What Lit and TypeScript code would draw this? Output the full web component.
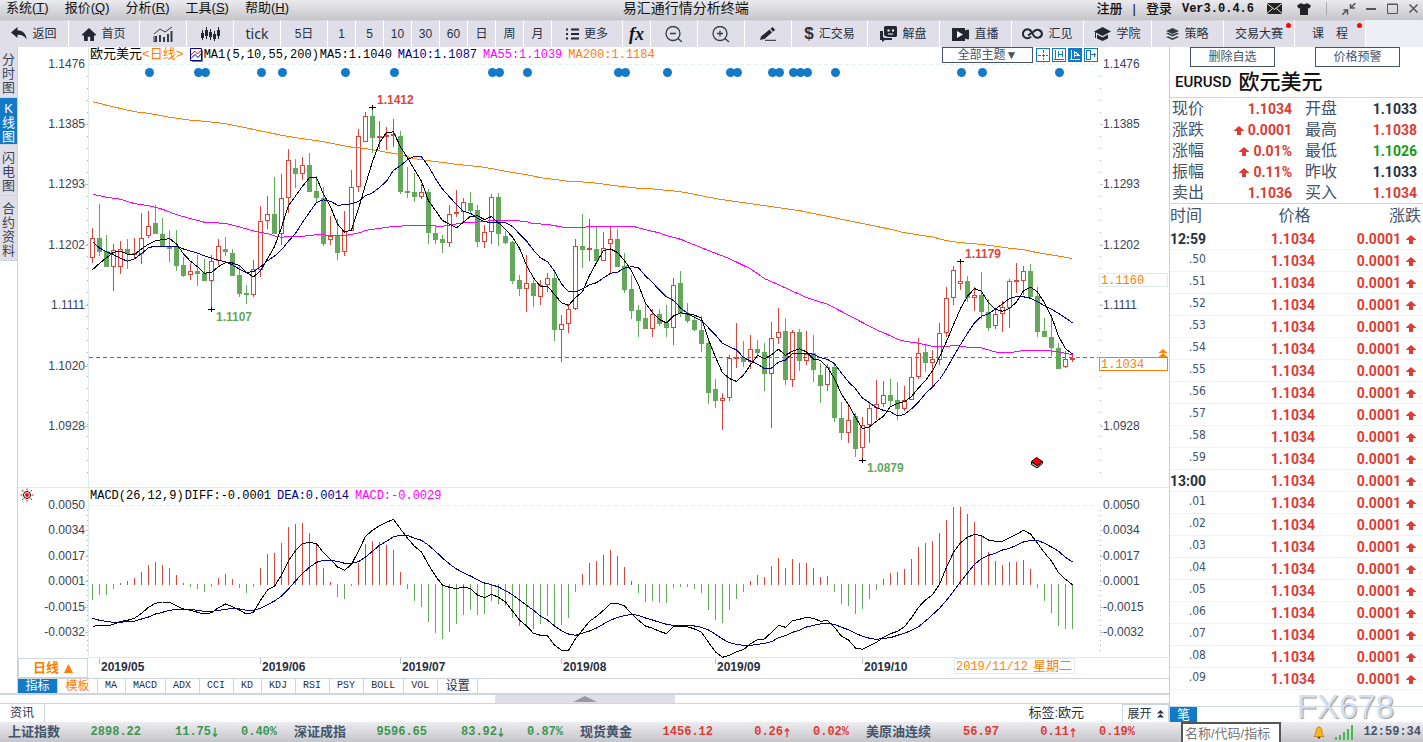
import { LitElement, html, svg, css } from "lit";
import { customElement } from "lit/decorators.js";
import { classMap } from "lit/directives/class-map.js";

const STEP = 7;
const X0 = 92;
const barX = (i: number) => X0 + STEP * i;

/* Each bar: direction, high, body top, body bottom, low (thirds of a chart unit, measured from the segment's base). */
const SEGMENTS = [
  {
    base: 90,
    bars: `r414,445,502,518 g342,445,483,497 g435,483,530,530 r462,481,530,600 r454,479,530,551 g449,477,490,536
r445,489,494,502 r369,445,490,521 r364,409,437,442 g345,399,431,431 g384,432,470,470 g422,470,474,515
g422,473,525,540 g503,525,557,560 r520,543,553,569 g495,543,551,587 g508,551,572,572 r497,514,572,656
r448,469,512,522 g441,477,485,497 g477,489,555,555 g530,555,611,620 g587,611,614,639 r511,538,614,620
r348,394,539,560 r318,373,392,416 g262,372,431,431 r254,324,431,464 r177,211,323,368 g209,234,251,293
r201,226,251,269 g189,226,303,305 g260,303,323,335 g293,324,459,465 r378,440,448,464 g388,437,486,509
r364,423,485,497 r240,292,422,422 r117,139,290,305 r67,79,154,154 g52,79,143,186 r94,139,143,176
r112,136,140,177 r87,132,137,170 g124,139,303,311 g231,303,306,323 g249,306,320,335 r283,307,320,325
g297,306,426,459 g406,430,447,459 g437,447,458,486 r345,373,458,468 r300,366,371,380 r324,337,364,396
g306,339,360,368 g347,360,453,468 r406,427,453,471 r312,322,425,461 g310,321,431,465 g424,438,456,459
g453,456,570,579 g557,570,594,617 r495,580,594,665 g572,580,617,648 r570,586,620,644 r549,565,584,605
g545,565,719,750 r677,703,718,815 r644,658,700,728 r447,469,656,659 g372,468,477,533 r387,474,478,512
g411,477,512,515 r426,475,512,512 r409,447,461,547 g417,447,530,530 g489,530,597,608 g556,597,660,686
g645,660,692,738 g638,684,716,716 r657,673,715,738 g657,672,701,707 g645,701,713,740 r564,586,713,764
g543,579,669,680 g640,669,692,698 g680,692,717,722 g680,720,759,785`,
  },
  {
    base: 230,
    bars: `g330,339,488,521 g449,477,512,533 r491,505,512,597 r375,385,503,510 r279,381,386,413 g335,384,393,408
r315,358,395,416 g330,357,366,378 g341,366,431,480 r277,325,430,593 r235,307,322,339 g264,303,449,462
r300,307,449,468 g297,306,392,420 r303,373,392,402 g316,371,417,453 g399,435,465,516 r402,412,464,480
g402,411,563,573 g516,564,608,629 r530,571,608,638 g551,558,654,678 r561,586,653,688 r521,535,584,638
r450,522,533,567 r453,496,521,530 g447,495,510,528 g456,510,536,567 r469,512,536,542 r382,442,508,508
r324,370,439,446 g346,366,398,423 r360,388,398,466 r280,310,387,402 r171,205,307,320 r108,121,202,222
r94,154,160,177 g139,153,203,215 r172,196,202,240 g126,195,245,264 g207,246,293,302 r237,253,287,296
r213,232,250,303 r148,153,231,291 r99,150,153,186 r108,124,150,194 g102,123,198,204 g171,198,303,320
g264,303,320,320 g266,321,353,377 g339,354,416,416 r364,388,410,413 r376,384,387,395`,
  },
];

interface Bar { up: boolean; high: number; top: number; bottom: number; low: number; close: number }

const BARS: Bar[] = SEGMENTS.flatMap(({ base, bars }) =>
  bars.split(/\s+/).map((t) => {
    const up = t[0] === "r";
    const [high, top, bottom, low] = t.slice(1).split(",").map((n) => base + Number(n) / 3);
    return { up, high, top, bottom, low, close: up ? top : bottom };
  }),
);

const movingAverage = (n: number, head: number[]) =>
  BARS.map((_, i) =>
    i < head.length
      ? 90 + head[i] / 3
      : BARS.slice(i - n + 1, i + 1).reduce((s, b) => s + b.close, 0) / n,
  );

const MA5 = movingAverage(5, [539, 520, 503, 487]);
const MA10 = movingAverage(10, [455, 474, 485, 494, 505, 514, 506, 491, 473]);

const curve = (ox: number, oy: number, pts: string) =>
  pts.split(" ").map((p) => {
    const [x, y] = p.split(",").map(Number);
    return `${(ox + x / 3).toFixed(1)},${(oy + y / 3).toFixed(1)}`;
  }).join(" ");

const MA55 = [
  curve(0, 90, "278,313 320,322 362,328 404,341 446,347 488,358 530,374 572,386 614,397 677,400 719,411 761,423 803,431 824,438 845,442 866,439 908,439 950,434 1034,437 1080,428"),
  curve(340, 90, "77,421 161,409 245,406 308,409 371,398 434,395 455,391 520,391 560,395 581,401 623,403 665,411 738,411 754,408 875,408 917,419 959,429 980,437 1022,448 1064,465 1080,471"),
  curve(700, 230, "0,52 68,78 89,86 152,117 194,146 257,174 320,203 383,223 446,256 509,289 530,300 551,308 593,328 614,334 656,340 698,349 740,350 761,346 803,352 845,354 887,366 929,368 971,361 1034,361 1076,366 1118,374"),
].join(" ");

const MA200 = [
  curve(0, 90, "278,35 320,46 404,65 446,70 509,82 572,91 614,94 677,101 740,114 845,136 887,143 971,155 1034,168 1060,172"),
  curve(340, 90, "56,173 98,179 140,187 182,194 224,206 266,212 350,223 434,232 497,244 560,254 602,263 686,274 749,277 833,288 896,295 938,297 1022,305 1064,313 1106,322 1140,328"),
  curve(700, 230, "300,-58 450,-27 583,0 604,6 656,15 698,21 740,32 782,38 824,41 866,46 929,55 971,59 1013,68 1055,75 1097,82 1115,86"),
].join(" ");

const nums = (s: string) => s.trim().split(/\s+/).map((n) => 480 + Number(n) / 3);

const HIST = nums(`360 345 345 327 308 303 294 276 254 246 254 264 285 308 321 327 336 321 294 282 297 324 339 321 264
222 219 188 141 132 128 158 190 264 306 350 357 318 249 192 183 186 194 210 276 327 363 381 426 459 477 456 432 405 390
405 402 363 372 378 414 438 438 447 432 408 435 435 414 336 282 249 243 225 210 228 261 303 339 366 363 369 369 324 321
321 327 339 390 420 429 390 357 336 303 285 291 258 234 264 237 249 249 264 291 288 336 372 378 402 387 357 330 297 279
276 267 237 201 189 183 159 120 81 81 102 126 167 216 243 255 246 246 240 267 324 363 399 438 447 447`);

const DIFF = nums(`439 436 438 433 424 421 415 400 382 370 366 367 377 387 391 397 402 398 383 372 380 391 402 397 361
330 319 285 242 212 191 187 191 218 238 261 271 253 213 169 151 137 127 118 147 175 199 216 254 288 316 322 326 321 326
345 353 343 352 366 393 420 438 460 466 467 495 511 511 476 450 424 409 391 370 370 378 401 421 438 445 454 461 440 440
440 447 457 487 516 532 526 515 509 491 479 477 457 436 442 422 418 412 415 424 421 442 469 480 504 508 497 487 472 461
454 440 413 382 360 344 313 262 217 188 172 163 167 180 184 184 173 163 151 162 190 218 243 278 298 314`);

const DEA = nums(`415 421 424 427 427 424 424 417 411 402 397 391 388 387 388 391 394 394 391 388 385 387 391 391 385
374 363 348 327 303 280 262 247 241 241 244 250 250 245 231 214 196 184 170 166 166 175 181 196 214 234 252 267 278 288
299 309 314 321 332 344 360 376 391 408 420 438 452 462 466 460 453 444 432 421 412 407 403 406 414 420 427 433 436 436
436 438 442 450 463 477 488 493 496 496 493 490 485 473 467 457 451 441 436 432 430 433 442 449 460 469 475 478 475 473
466 460 451 440 423 404 385 361 334 306 279 253 236 226 220 210 205 196 186 181 181 190 201 214 232 246`);

const line = (ys: number[]) => ys.map((y, i) => `${barX(i) + 0.5},${y.toFixed(1)}`).join(" ");

const EVENTS = [149.5, 198.5, 205.5, 261.5, 282.5, 345.5, 394.5, 492.5, 499.5, 527.5, 618.5, 625.5, 667.5, 730.5, 737.5,
  772.5, 779.5, 793.5, 800.5, 807.5, 835.5, 961.5, 982.5, 1059.5];

const PRICE_TICKS: [number, string, boolean][] = [
  [64, "1.1476", true], [124, "1.1385", true], [184, "1.1293", true], [245, "1.1202", true],
  [305, "1.1111", true], [366, "1.1020", false], [426, "1.0928", true],
];
const MACD_TICKS: [number, string][] = [
  [505, "0.0050"], [530, "0.0034"], [556, "0.0017"], [581, "0.0001"], [607, "-0.0015"], [632, "-0.0032"],
];
const MONTHS: [number, string][] = [
  [99, "2019/05"], [260, "2019/06"], [400, "2019/07"], [561, "2019/08"], [715, "2019/09"], [862, "2019/10"],
];

const ICONS = {
  back: html`<svg class="ic" width="16" height="14" viewBox="0 0 16 14"><path fill="#222733" d="M6.500 0 0 5.500 6.500 11V7.800C11 7.600 13.500 9 15.500 12.500 15.500 7 12 3.600 6.500 3.300z"/></svg>`,
  home: html`<svg class="ic" width="14" height="13" viewBox="0 0 14 13"><path fill="#222733" d="M7 0 0 6.500v1h2V13h3.800V8.800h2.400V13H12V7.500h2v-1z"/></svg>`,
  bars: html`<svg class="ic" width="20" height="16" viewBox="0 0 20 16"><path stroke="#333a48" stroke-width="2" d="M3 16v-6M7 16V9M11 16v-5M15 16V8M18.500 16V5"/><path fill="none" stroke="#333a48" d="M1 8l6-5 5 3 7-5"/><path stroke="#333a48" stroke-width="1" d="M1 15.500h1M1 10v6"/></svg>`,
  candles: html`<svg class="ic" width="20" height="16" viewBox="0 0 20 16"><path stroke="#222733" d="M2.500 4v10M6.500 1v12M10.500 3v11M14.500 5v10M18.500 1v12"/><path stroke="#222733" stroke-width="3" d="M2.500 7v5M6.500 4v6M10.500 6v5M14.500 8v5M18.500 4v6"/></svg>`,
  list: html`<svg class="ic" width="13" height="12" viewBox="0 0 13 12"><path stroke="#222733" stroke-width="2" d="M0 1.500h2M0 6h2M0 10.500h2M5 1.500h8M5 6h8M5 10.500h8"/></svg>`,
  minus: html`<svg class="ic" width="18" height="17" viewBox="0 0 18 17"><circle cx="8" cy="7.500" r="7" fill="none" stroke="#333a48" stroke-width="1.300"/><path stroke="#333a48" stroke-width="1.300" d="M5 7.500h6M13 12.500l4 3.500"/></svg>`,
  plus: html`<svg class="ic" width="18" height="17" viewBox="0 0 18 17"><circle cx="8" cy="7.500" r="7" fill="none" stroke="#333a48" stroke-width="1.300"/><path stroke="#333a48" stroke-width="1.300" d="M5 7.500h6M8 4.500v6M13 12.500l4 3.500"/></svg>`,
  pencil: html`<svg class="ic" width="17" height="14" viewBox="0 0 17 14"><path fill="#222733" d="M1 9.500 9.500 2.500l2.500 3L4.500 12 0 13zM10.500 1.700 12.600 0l2.600 3-2.200 1.700z"/><path stroke="#222733" d="M5 13.300h11"/></svg>`,
  dollar: html`<b class="dollar">$</b>`,
  chat: html`<svg class="ic" width="17" height="16" viewBox="0 0 17 16"><path fill="#222733" d="M5 0h11l1 1v9l-1 1H8l-3-1-1-1V1zM0 5h3v6l2 1h7v2H5l-3 2v-2H0z"/><path fill="#fff" d="M7.500 3.500h2v2h-2zM12 3.500h2v2h-2zM8 7.500h5v1H8z"/></svg>`,
  video: html`<svg class="ic" width="17" height="13" viewBox="0 0 17 13"><path fill="#222733" d="M0 0h13v2.500l3-1 1 .5v9l-1 .5-3-1V13H0z"/><path fill="#fff" d="M5 3l6 3.500L5 10z"/></svg>`,
  link: html`<svg class="ic" width="21" height="12" viewBox="0 0 21 12"><g fill="none" stroke="#222733" stroke-width="2"><path d="M9 8.500A4.500 4.500 0 1 1 9.500 4L12 8a4.500 4.500 0 0 0 8-2 4.500 4.500 0 0 0-8-2.500"/><path d="M6 7.500 12.500 3"/></g></svg>`,
  cap: html`<svg class="ic" width="17" height="14" viewBox="0 0 17 14"><path fill="#222733" d="M8.500 0 17 4.500 8.500 9 0 4.500zM3 7.500 8.500 10.500 14 7.500v4L8.500 14 3 11.500zM1 5.500h1V11H1z"/></svg>`,
  layers: html`<svg class="ic" width="13" height="13" viewBox="0 0 13 13"><path fill="#333a48" d="M6.500 0 13 3 6.500 6 0 3zM0 5.500l2-.8 4.500 2 4.500-2 2 .8-6.500 3zM0 9l2-.8 4.500 2 4.500-2 2 .8-6.500 3z"/></svg>`,
};

interface Tool { text?: string; icon?: unknown; size: string; dot?: boolean; label?: string; cls?: string }
const TOOLS: Tool[] = [
  { text: "返回", icon: ICONS.back, size: "w69" },
  { text: "首页", icon: ICONS.home, size: "w71" },
  { icon: ICONS.bars, size: "w47", label: "分时" },
  { icon: ICONS.candles, size: "w47", label: "K线" },
  { text: "tick", size: "w47", cls: "tick" },
  { text: "5日", size: "w47" },
  ...["1", "5", "10", "30", "60", "日", "周", "月"].map((text) => ({ text, size: "w28" })),
  { text: "更多", icon: ICONS.list, size: "w71" },
  { text: "fx", size: "w28", cls: "fx" },
  { icon: ICONS.minus, size: "w47", label: "缩小" },
  { icon: ICONS.plus, size: "w47", label: "放大" },
  { icon: ICONS.pencil, size: "w47", label: "画线" },
  { text: "汇交易", icon: ICONS.dollar, size: "w76" },
  { text: "解盘", icon: ICONS.chat, size: "w72" },
  { text: "直播", icon: ICONS.video, size: "w72" },
  { text: "汇见", icon: ICONS.link, size: "w72" },
  { text: "学院", icon: ICONS.cap, size: "w68" },
  { text: "策略", icon: ICONS.layers, size: "w72" },
  { text: "交易大赛", size: "w71", dot: true },
  { text: "课　程", size: "w71", dot: true },
];

const MENUS: [string, string][] = [["系统", "T"], ["报价", "Q"], ["分析", "R"], ["工具", "S"], ["帮助", "H"]];

const arrow = html`<svg class="up" width="10" height="9" viewBox="0 0 10 9"><path fill="#dc3c34" d="M5 0 10 4.500V5H7v4H3V5H0v-.5z"/></svg>`;

const QUOTES: [string, string, boolean, string, string, string][] = [
  ["现价", "1.1034", false, "开盘", "1.1033", "flat"],
  ["涨跌", "0.0001", true, "最高", "1.1038", "rise"],
  ["涨幅", "0.01%", true, "最低", "1.1026", "fall"],
  ["振幅", "0.11%", true, "昨收", "1.1033", "flat"],
  ["卖出", "1.1036", false, "买入", "1.1034", "rise"],
];
const TIMES = ["12:59", ".50", ".51", ".52", ".53", ".54", ".55", ".56", ".57", ".58", ".59", "13:00",
  ".01", ".02", ".03", ".04", ".05", ".06", ".07", ".08", ".09"];

const INDEXES: [string, string, string, string, boolean][] = [
  ["上证指数", "2898.22", "11.75", "0.40%", false],
  ["深证成指", "9596.65", "83.92", "0.87%", false],
  ["现货黄金", "1456.12", "0.26", "0.02%", true],
  ["美原油连续", "56.97", "0.11", "0.19%", true],
];

@customElement("app-root")
export class AppRoot extends LitElement {
  static styles = css`
    :host { display: flex; flex-direction: column; height: 100vh; background: #fff; color: #28303f;
      font: 13px/16px "Liberation Sans", "Noto Sans CJK SC", sans-serif; overflow: hidden; }
    * { box-sizing: border-box; }
    button, select, input { font: inherit; color: inherit; border: 0; background: none; padding: 0; margin: 0; border-radius: 0; white-space: nowrap; }
    a { color: inherit; text-decoration: none; }
    svg { display: block; flex: none; }
    .mono { font-family: "Liberation Mono", "Noto Sans CJK SC", monospace; font-size: 12px; }

    .titlebar { display: flex; justify-content: space-between; height: 20px; flex: none;
      background: linear-gradient(#eaeaef, #c5c5ca); color: #111; line-height: 16px; }
    .menus { display: flex; gap: 16px; padding-left: 6px; }
    .menus button { height: 16px; line-height: 16px; }
    .title { font-size: 14px; line-height: 16px; font-weight: 400; margin: 0; padding-right: 14px; }
    .account { display: flex; align-items: center; gap: 10px; padding-right: 5px; height: 17px; font-weight: 500; white-space: nowrap; }
    .account .mono { font-weight: 700; }
    .account .wins { display: flex; gap: 11px; align-items: center; }
    .glyphs { display: flex; gap: 15px; align-items: center; padding-left: 3px; }

    .toolbar { display: flex; height: 27px; flex: none; background: #ededf4; color: #28303f; }
    .toolbar button { position: relative; flex: none; display: flex; align-items: center; justify-content: center; gap: 5px;
      background: #e0dfe9; border-right: 1px solid #fff; border-top: 1px solid #d3d3da; font-size: 12px; }
    .toolbar .w28 { width: 28px; } .toolbar .w47 { width: 47px; } .toolbar .w68 { width: 68px; }
    .toolbar .w69 { width: 69px; } .toolbar .w71 { width: 71px; } .toolbar .w72 { width: 72px; } .toolbar .w76 { width: 76px; }
    .toolbar .tick { font: 14px/18px "Noto Sans", sans-serif; }
    .toolbar .fx { font: italic bold 18px/20px "Liberation Serif", serif; color: #111; }
    .dollar { font: bold 17px/20px "Liberation Sans", sans-serif; }
    .dot { position: absolute; top: 2px; right: 3px; width: 5px; height: 5px; border-radius: 50%; background: #f00; }

    .main { display: flex; flex: 1; min-height: 0; }
    .left { display: flex; flex-direction: column; flex: 1; min-width: 0; }
    .work { display: flex; flex: 1; min-height: 0; border-bottom: 2px solid #ccd6de; }
    .side { width: 18px; flex: none; border-right: 1px solid #c9d3db; display: flex; flex-direction: column; }
    .side button { width: 17px; padding: 6px 2px 2px; background: #e0dfe9; white-space: normal; line-height: 14px; color: #3a4456;
      border-bottom: 1px solid #ccd4dc; word-break: break-all; }
    .side .on { background: #127ac8; color: #fff; padding: 4px 2px 0; }
    .column { display: flex; flex-direction: column; flex: 1; min-width: 0; }
    .chart { flex: 1; min-height: 0; display: grid; grid-template: minmax(0, 1fr) / minmax(0, 1fr); }
    .chart > * { grid-area: 1 / 1; }
    .plot { width: 100%; height: 100%; }
    .layer { display: grid; grid-template-rows: 441fr 170fr; padding: 0 71px 0 72px; }
    .legend { display: flex; gap: 6px; height: 16px; white-space: nowrap; color: #000; }
    .pair { display: flex; gap: 1px; }
    .cjk { font-size: 13px; }
    .orange { color: #ff8000; } .navy { color: #000090; } .pink { color: #f0f; }
    .themes { display: flex; gap: 2px; margin-left: auto; align-items: center; }
    .themes select { appearance: none; width: 91px; height: 16px; border: 1px solid #44546a; text-align-last: center; font: 12px/14px "Liberation Sans", "Noto Sans CJK SC", sans-serif;
      color: #44546a; margin-right: 1px; background: #fff; }
    .dates { display: flex; height: 20px; flex: none; }
    .period { width: 70px; border: 1px solid #ccd6de; color: #ff8000; font-weight: 700; line-height: 16px; flex: none;
      display: flex; align-items: center; justify-content: center; gap: 5px; }
    .axis { flex: 1; min-width: 0; height: 20px; }
    .tabs { display: flex; height: 15px; flex: none; border-top: 1px solid #ccd6de; color: #28303f; }
    .tabs button { border-right: 1px solid #ccd6de; padding: 0 8px 0 7px; height: 14px;
      font: 10px/14px "Liberation Mono", monospace; }
    .tabs .zh { font: 12px/14px "Liberation Sans", "Noto Sans CJK SC", sans-serif; width: 40px; padding: 0; }
    .tabs .on { background: #127ac8; color: #fff; }
    .grip { height: 9px; flex: none; border-bottom: 1px solid #ccd6de; display: flex; justify-content: center; }
    .grip button { width: 180px; background: #e0dfe9; display: flex; justify-content: center; align-items: center; height: 8px; }
    .news { display: flex; height: 18px; flex: none; font-size: 12px; line-height: 18px; }
    .news .tab { width: 45px; border-right: 1px solid #ccd6de; }
    .news .tag { margin-left: auto; margin-right: 38px; font-size: 13px; }
    .news .open { width: 47px; border: 1px solid #ccd6de; border-bottom: 0; display: flex; align-items: center; justify-content: center; gap: 5px; }

    .right { width: 254px; flex: none; border-left: 1px solid #c5d0d9; display: flex; flex-direction: column; color: #44546a; }
    .actions { display: flex; justify-content: space-between; padding: 0 23px 0 20px; height: 20px; flex: none; }
    .actions button { width: 85px; border: 1px solid #44546a; font-size: 12px; }
    .pairname { display: flex; align-items: center; gap: 7px; margin: 0; padding-left: 5px; height: 31px; border-bottom: 1px solid #ccd6de; color: #111;
      font: 500 15px/30px Roboto, sans-serif; flex: none; }
    .pairname span { font: 500 21px/30px "Liberation Sans", "Noto Sans CJK SC", sans-serif; }
    table { border-collapse: collapse; width: 100%; table-layout: fixed; }
    td, th { padding: 0; font-weight: 400; text-align: left; white-space: nowrap; }
    .quotes { border-bottom: 1px solid #ccd6de; }
    .quotes tr { height: 21px; }
    .quotes th { font-size: 16px; line-height: 21px; padding-left: 2px; }
    .quotes .c1 { width: 40px; } .quotes .c2 { width: 82px; } .quotes .c3 { width: 46px; }
    .quotes .second { padding-left: 13px; }
    .num { font: 700 14px/20px Roboto, sans-serif; text-align: right; }
    .edge { padding-right: 6px; }
    .rise { color: #dc3c34; } .fall { color: #169a16; } .flat { color: #28303f; }
    .up { display: inline-block; margin-right: 4px; }
    .ticks th { font-size: 16px; line-height: 22px; height: 23px; }
    .ticks .t1 { width: 36px; } .ticks .t2 { width: 109px; }
    .ticks .r { text-align: right; }
    .ticks .r:last-child { padding-right: 2px; }
    .ticks td { height: 22px; border-bottom: 1px solid #f0f2f4; padding-top: 2px; line-height: 18px; }
    .ticks td.num { line-height: 18px; }
    .ticks .time { font: 12px/14px "DejaVu Sans Condensed", "Noto Sans", sans-serif; text-align: right; padding: 0 0 3px; }
    .ticks .full { font: 700 14px/18px Roboto, sans-serif; color: #28303f; padding: 2px 0 0; }
    .ticks .up { margin: 0 7px 0 5px; }
    .foot { margin-top: auto; display: flex; height: 16px; flex: none; border-top: 1px solid #ccd6de; }
    .foot button { width: 27px; background: #127ac8; color: #fff; line-height: 15px; }
    .mark { margin-left: auto; margin-right: 29px; font: 33px/32px "Liberation Sans", sans-serif; color: #cfe0f4;
      text-shadow: 1px 1px 1px #a09890; position: relative; top: -16px; height: 32px; }

    .status { display: flex; align-items: center; height: 20px; flex: none; background: linear-gradient(#ededf1, #c6c6ca);
      padding-left: 8px; color: #44546a; font-weight: 700; }
    .index { width: 286px; flex: none; display: grid; grid-template-columns: 60px 73px 77px 59px; white-space: nowrap; align-items: center; }
    .index .v { text-align: right; }
    .index .chg { display: flex; justify-content: flex-end; align-items: center; gap: 1px; }
    .gain { color: #dc3c34; } .loss { color: #3c9650; }
    .status input { width: 100px; height: 20px; border: 2px solid #555; border-bottom: 0; background: #fff; margin-left: 29px; padding-left: 2px;
      font: 13px/17px "Liberation Sans", "Noto Sans CJK SC", sans-serif; }
    .status input::placeholder { color: #777; opacity: 1; }
    .tray { display: flex; align-items: center; gap: 10px; margin-left: auto; padding-right: 2px; }
  `;

  private renderBar = (b: Bar, i: number) => {
    const x = barX(i);
    const top = Math.floor(b.top);
    const bottom = Math.max(top + 1, Math.floor(b.bottom) + 1);
    const high = Math.floor(b.high);
    const low = Math.floor(b.low) + 1;
    if (!b.up || bottom - top < 3) {
      const color = b.up ? "#d8463c" : "#64a85c";
      return svg`<path fill=${color} d="M${x} ${high}h1V${low}h-1zM${x - 2} ${top}h5V${bottom}h-5z"/>`;
    }
    return svg`<path fill="none" stroke="#d8463c" d="M${x + 0.5} ${high}V${top}M${x + 0.5} ${bottom}V${Math.max(low, bottom)}M${x - 1.5} ${top + 0.5}h4V${bottom - 0.5}h-4z"/>`;
  };

  private renderPlot() {
    const dots = (x: number, y0: number, y1: number) =>
      svg`<path stroke="#a9b4be" stroke-dasharray="1 11" d="M${x} ${y0}V${y1}"/>`;
    const cross = (x: number, y: number) => svg`<path stroke="#000" d="M${x - 3} ${y + 0.5}h7M${x + 0.5} ${y - 2}v5"/>`;
    return html`<svg class="plot" viewBox="18 47 1151 611" preserveAspectRatio="xMinYMin meet" font-family="Liberation Sans, sans-serif" font-size="12" fill="#3a4256">
      <g shape-rendering="crispEdges" fill="none">
        <path stroke="#dfecee" d="M88.500 47V658M18 487.500H1169M88 657.500H1169"/>
        <path stroke="#e3eeee" stroke-dasharray="4 3" d="M89 64.500H1099M89 505.500H1099"/>
        ${dots(87.5, 76, 480)}${dots(1100.5, 76, 480)}
        <path stroke="#a9b4be" stroke-dasharray="1 4" d="M87.500 510V655M1100.500 510V655"/>
        ${PRICE_TICKS.slice(1).map(([y]) => svg`<path stroke="#b9c5ce" d="M85 ${y + 0.5}h3M1100 ${y + 0.5}h3"/>`)}
        ${MACD_TICKS.slice(1).map(([y]) => svg`<path stroke="#b9c5ce" d="M85 ${y + 0.5}h3M1100 ${y + 0.5}h3"/>`)}
        <path stroke="#1482dc" stroke-dasharray="4 3" d="M89 357.500H1098"/>
      </g>
      ${PRICE_TICKS.map(([y, t, both]) => svg`<text x="85" y=${y + 4} text-anchor="end">${t}</text>
        ${both ? svg`<text x="1103" y=${y + 4}>${t}</text>` : ""}`)}
      ${MACD_TICKS.map(([y, t]) => svg`<text x="85" y=${y + 4} text-anchor="end">${t}</text><text x="1103" y=${y + 4}>${t}</text>`)}
      <g fill="#127ac8">${EVENTS.map((x) => svg`<circle cx=${x} cy="72.500" r="4.500"/>`)}</g>
      <g shape-rendering="crispEdges">${BARS.map(this.renderBar)}
        ${HIST.map((y, i) => svg`<path stroke=${y < 584.3 ? "#d8463c" : "#64a85c"} d="M${barX(i) + 0.5} ${y < 584.3 ? 585 : 584}V${Math.round(y)}"/>`)}
      </g>
      <g fill="none" stroke-linejoin="round" shape-rendering="crispEdges">
        <polyline stroke="#ff8000" points=${MA200}/>
        <polyline stroke="#f0f" points=${MA55}/>
        <polyline stroke="#000090" points=${line(MA10)}/>
        <polyline stroke="#000" points=${line(MA5)}/>
        <polyline stroke="#000090" points=${line(DEA)}/>
        <polyline stroke="#000" points=${line(DIFF)}/>
        ${cross(211, 309)}${cross(372, 107)}${cross(960, 261)}${cross(862, 460)}
      </g>
      <g font-weight="700"><text fill="#d8463c" x="377" y="104">1.1412</text><text fill="#d8463c" x="965" y="258">1.1179</text>
        <text fill="#64a85c" x="216" y="321">1.1107</text><text fill="#64a85c" x="867" y="472">1.0879</text></g>
      <g shape-rendering="crispEdges" fill="#fff"><path stroke="#dfecee" d="M1099.500 273.500h68v13h-68z"/><path stroke="#ff8000" d="M1099.500 357.500h68v13h-68z"/></g>
      <path fill="#ff8000" d="M1163 349l4.500 4h-9zM1163 353l4.500 4h-9z"/>
      <g fill="#ff8000" font-family="Liberation Mono, monospace"><text x="1101" y="284">1.1160</text><text x="1101" y="368">1.1034</text></g>
      <g transform="translate(27 495)"><circle r="3.500" fill="#fff" stroke="#000"/><circle r="2" fill="#f00"/>
        <path stroke="#f00" d="M0-6.500v2M0 4.500v2M-6.500 0h2M4.500 0h2M-5-5l1.500 1.500M5-5 3.500-3.500M-5 5l1.500-1.500M5 5 3.500 3.500"/></g>
      <path fill="#f00" stroke="#000" d="M1031.500 461.500l5-4 6 4-5 4.500z"/><path fill="#bbb" stroke="#000" d="M1031.500 462v2.500l5.500 3.500 5.500-4.500v-2l-5 4.500z"/>
    </svg>`;
  }

  private renderChart() {
    const tool = (d: string, on = false) => html`<svg width="14" height="14" viewBox="0 0 14 14" shape-rendering="crispEdges">
      <path fill=${on ? "#127ac8" : "#fff"} stroke="#127ac8" d="M.5.5h13v13H.500z"/><path fill="none" stroke=${on ? "#fff" : "#127ac8"} d=${d}/></svg>`;
    return html`<section class="chart" aria-label="K线图">
      ${this.renderPlot()}
      <div class="layer">
        <div class="legend mono">
          <span><span class="cjk">欧元美元</span><span class="orange cjk">&lt;日线&gt;</span></span>
          <span class="pair">
            <svg width="13" height="15" viewBox="0 -1 13 15"><path fill="none" stroke="#777" d="M2 13.500h10.500V2"/><path fill="#fff" stroke="#000090" d="M.5.500h11v12H.500z"/><path fill="none" stroke="#f00" d="M1 7l3.500-4 3 3 4-4"/><path fill="none" stroke="#000090" d="M1 10.500l4-4 3 3 3.500-4"/></svg>
            <span>MA1(5,10,55,200)</span><span>MA5:1.1040</span></span>
          <span class="navy">MA10:1.1087</span><span class="pink">MA55:1.1039</span><span class="orange">MA200:1.1184</span>
          <div class="themes">
            <select aria-label="主题"><option>全部主题▼</option></select>
            ${tool("M7.500 2v3M7.500 6v3M7.500 10v2M2 7.500h3M6 7.500h3M10 7.500h2")}
            ${tool("M3.500 2v9.500M2 11.500h10M6.500 3v6M10.500 3v6M6 6.500h4")}
            ${tool("M3.500 2v9.500M2 11.500h10M6.500 3v6M7 4l4 3H7", true)}
            ${tool("M2.500 2.500h4v9h-4zM6 6.500h6M10.500 4.500v4")}
          </div>
        </div>
        <div class="legend mono">
          <span class="pair"><span>MACD(26,12,9)</span><span>DIFF:-0.0001</span></span>
          <span class="navy">DEA:0.0014</span><span class="pink">MACD:-0.0029</span>
        </div>
      </div>
    </section>`;
  }

  private renderDates() {
    return html`<div class="dates">
      <button class="period">日线<svg width="9" height="9" viewBox="0 0 9 9"><path fill="#ff8000" d="M4.500 0 9 9H0z"/></svg></button>
      <svg class="axis" viewBox="88 658 1081 20" preserveAspectRatio="xMinYMin meet" font-family="Liberation Sans, sans-serif" font-weight="700" font-size="12" fill="#28303f">
        ${MONTHS.map(([x, t]) => svg`<path stroke="#b9c5ce" d="M${x + 0.5} 658v6"/><text x=${x + 2} y="671">${t}</text>`)}
        <path fill="#fff" stroke="#dfecee" d="M954.500 658.500h120v15h-120z"/>
        <text x="956" y="670" fill="#ff8000" font-weight="400" font-family="Liberation Mono, Noto Sans CJK SC, monospace">2019/11/12 <tspan font-size="13" x="1033">星期二</tspan></text>
      </svg>
    </div>`;
  }

  private renderRight() {
    return html`<aside class="right">
      <div class="actions"><button>删除自选</button><button>价格预警</button></div>
      <h2 class="pairname">EURUSD <span>欧元美元</span></h2>
      <table class="quotes">
        <colgroup><col class="c1" /><col class="c2" /><col class="c3" /><col /></colgroup>
        ${QUOTES.map(([a, v, up, b, w, cls]) => html`<tr><th>${a}</th><td class="num rise">${up ? arrow : ""}${v}</td>
          <th class="second">${b}</th><td class="num edge ${cls}">${w}</td></tr>`)}
      </table>
      <table class="ticks">
        <colgroup><col class="t1" /><col class="t2" /><col /></colgroup>
        <thead><tr><th>时间</th><th class="r">价格&nbsp;</th><th class="r">涨跌</th></tr></thead>
        <tbody>${TIMES.map((t) => html`<tr><td class=${classMap({ time: true, full: t.length === 5 })}>${t}</td>
          <td class="num rise">1.1034</td><td class="num rise">0.0001${arrow}</td></tr>`)}</tbody>
      </table>
      <div class="foot"><button>笔</button><span class="mark">FX678</span></div>
    </aside>`;
  }

  render() {
    return html`
      <header class="titlebar">
        <nav class="menus">${MENUS.map(([t, k]) => html`<button>${t}(<u>${k}</u>)</button>`)}</nav>
        <h1 class="title">易汇通行情分析终端</h1>
        <div class="account">
          <a href="#register">注册</a><span>|</span><a href="#login">登录</a><span class="mono">Ver3.0.4.6</span>
          <span class="glyphs">
            <svg width="15" height="11" viewBox="0 0 15 11"><path fill="#222" d="M0 0h15v11H0z"/><path fill="none" stroke="#eee" d="M0 .5l7.500 6 7.500-6M0 10.500l5.500-5M15 10.500l-5.500-5"/></svg>
            <svg width="14" height="12" viewBox="0 0 14 12"><path fill="#222" d="M4 0Q7 2.500 10 0l4 2.500-1.500 3L11 5v7H3V5l-1.500.5L0 2.500z"/></svg>
            <svg width="1" height="13" viewBox="0 0 1 13"><path fill="#aaa" d="M0 0h1v13H0z"/></svg>
            <svg width="14" height="12" viewBox="0 0 14 12"><path stroke="#555" stroke-width="1.500" fill="none" d="M13.500 0 9 4.500M8.500 1v4H13M0 12l5-5M1.500 7h4v4.500"/></svg>
          </span>
          <span class="wins">
            <svg width="10" height="11" viewBox="0 0 10 11"><path stroke="#555" stroke-width="2" d="M0 6h10"/></svg>
            <svg width="11" height="11" viewBox="0 0 11 11"><path fill="none" stroke="#555" d="M.5 1v9.500h10V1zM0 1.500h11"/></svg>
            <svg width="9" height="9" viewBox="0 0 9 9"><path stroke="#555" stroke-width="1.500" d="M.5.500l8 8M8.500.500l-8 8"/></svg>
          </span>
        </div>
      </header>
      <nav class="toolbar">
        ${TOOLS.map((t) => html`<button class="${t.size} ${t.cls ?? ""}" aria-label=${t.label ?? t.text ?? ""}>${t.icon ?? ""}${t.text ? html`<span>${t.text}</span>` : ""}${t.dot ? html`<i class="dot"></i>` : ""}</button>`)}
      </nav>
      <div class="main">
        <div class="left">
          <div class="work">
            <nav class="side"><button>分时图</button><button class="on">K线图</button><button>闪电图</button><button>合约资料</button></nav>
            <div class="column">
              ${this.renderChart()}${this.renderDates()}
              <nav class="tabs">
                <button class="zh on">指标</button><button class="zh orange">模板</button>
                ${["MA", "MACD", "ADX", "CCI", "KD", "KDJ", "RSI", "PSY", "BOLL", "VOL"].map((t) => html`<button>${t}</button>`)}
                <button class="zh">设置</button>
              </nav>
            </div>
          </div>
          <div class="grip"><button aria-label="展开面板"><svg width="24" height="6" viewBox="0 0 24 6"><path fill="#999" d="M12 0l12 6H0z"/></svg></button></div>
          <div class="news"><button class="tab">资讯</button><span class="tag">标签:欧元</span>
            <button class="open">展开<svg width="7" height="8" viewBox="0 0 7 8"><path fill="#28303f" d="M3.500 0 7 3.500H0zM3.500 4 7 7.500H0z"/></svg></button></div>
        </div>
        ${this.renderRight()}
      </div>
      <footer class="status">
        ${INDEXES.map(([name, price, chg, pct, up]) => html`<div class="index"><span>${name}</span>
          <span class="v mono ${up ? "gain" : "loss"}">${price}</span>
          <span class="chg mono ${up ? "gain" : "loss"}">${chg}<svg width="6" height="11" viewBox="0 0 7 11"><path fill="none" stroke="currentColor" stroke-width="1.500" d=${up ? "M3.500 11V1M1 4 3.500 1 6 4" : "M3.500 0v10M1 7l2.500 3L6 7"}/></svg></span>
          <span class="v mono ${up ? "gain" : "loss"}">${pct}</span></div>`)}
        <input type="text" aria-label="搜索" placeholder="名称/代码/指标" />
        <div class="tray">
          <svg width="12" height="13" viewBox="0 0 12 13"><path fill="#fbb81c" stroke="#b9770a" stroke-width=".8" d="M6 .8C3.500 1.500 3 3.500 3 6 3 8 2 9 1 10.500h10C10 9 9 8 9 6 9 3.500 8.500 1.500 6 .8z"/><path fill="#222" d="M4.500 11h3L6 13z"/></svg>
          <svg width="18" height="15" viewBox="0 0 18 15"><path stroke="#3fbf4a" stroke-width="2" d="M1 15v-3M5 15v-5M9 15V7M13 15V4M17 15V0"/></svg>
          <span class="mono">12:59:34</span>
        </div>
      </footer>`;
  }
}
